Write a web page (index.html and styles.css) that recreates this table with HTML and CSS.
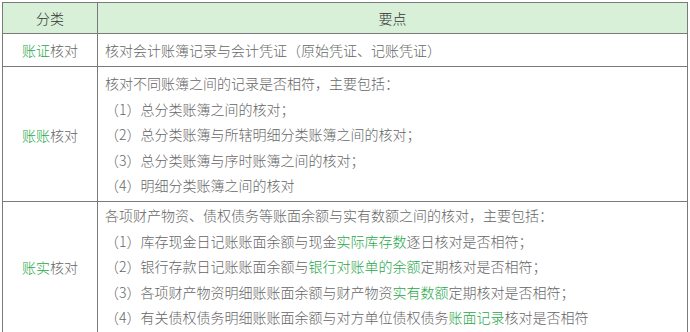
FILE: index.html
```html
<!DOCTYPE html>
<html lang="zh">
<head>
<meta charset="utf-8">
<link rel="stylesheet" href="styles.css">
</head>
<body>
<table class="tbl">
  <colgroup><col class="c1"><col class="c2"></colgroup>
  <thead>
    <tr class="head"><th>分类</th><th>要点</th></tr>
  </thead>
  <tbody>
    <tr class="r1">
      <td class="cat"><span class="g">账证</span>核对</td>
      <td class="txt">核对会计账簿记录与会计凭证（原始凭证、记账凭证）</td>
    </tr>
    <tr class="r2">
      <td class="cat"><span class="g">账账</span>核对</td>
      <td class="txt multi">
        <div>核对不同账簿之间的记录是否相符，主要包括：</div>
        <div>（1）总分类账簿之间的核对；</div>
        <div>（2）总分类账簿与所辖明细分类账簿之间的核对；</div>
        <div>（3）总分类账簿与序时账簿之间的核对；</div>
        <div>（4）明细分类账簿之间的核对</div>
      </td>
    </tr>
    <tr class="r3">
      <td class="cat"><span class="g">账实</span>核对</td>
      <td class="txt multi">
        <div>各项财产物资、债权债务等账面余额与实有数额之间的核对，主要包括：</div>
        <div>（1）库存现金日记账账面余额与现金<span class="g">实际库存数</span>逐日核对是否相符；</div>
        <div>（2）银行存款日记账账面余额与<span class="g">银行对账单的余额</span>定期核对是否相符；</div>
        <div>（3）各项财产物资明细账账面余额与财产物资<span class="g">实有数额</span>定期核对是否相符；</div>
        <div>（4）有关债权债务明细账账面余额与对方单位债权债务<span class="g">账面记录</span>核对是否相符</div>
      </td>
    </tr>
  </tbody>
</table>
</body>
</html>
```
FILE: styles.css
```css
html, body {
  margin: 0;
  padding: 0;
  background: #fff;
}
body {
  padding: 2px 0 0 2px;
  font-family: "Noto Sans CJK SC", "Noto Sans", sans-serif;
  font-size: 14px;
  font-weight: 300;
  color: #666;
  text-spacing-trim: space-all;
}
.tbl {
  border-collapse: collapse;
  width: 686px;
  table-layout: fixed;
}
.c1 { width: 95px; }
.tbl th, .tbl td {
  border: 1px solid #7a7a7a;
  padding: 0;
}
.head th {
  background: #d8efd8;
  color: #333;
  font-weight: 300;
  height: 30px;
  text-align: center;
}
.cat {
  text-align: center;
}
.txt {
  padding-left: 7px !important;
  text-align: left;
}
.r1 td { height: 32px; }
.r2 td { height: 132px; padding-top: 2px; }
.r3 td { height: 130px; border-bottom: 2px solid #8a8a8a; }
.multi div {
  line-height: 25.6px;
}
.g { color: #1fa84a; }
```
